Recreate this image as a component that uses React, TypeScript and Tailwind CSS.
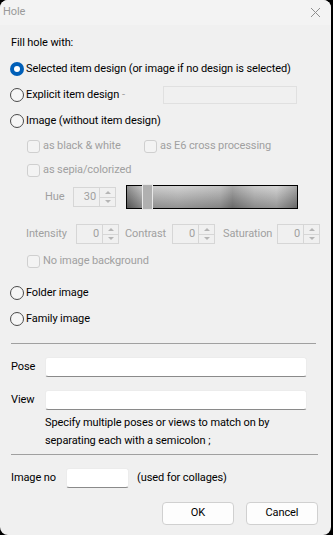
import React from 'react'

const font = { fontFamily: 'Roboto, "Segoe UI", sans-serif', letterSpacing: '-0.1px' }

function Radio({ checked, label }: { checked?: boolean; label: string }) {
  return (
    <div className="flex items-center h-[26px] whitespace-nowrap">
      {checked ? (
        <span className="shrink-0 w-[14px] h-[14px] rounded-full bg-[#005fb8] flex items-center justify-center mr-[2px] ml-[10px]">
          <span className="w-[6px] h-[6px] rounded-full bg-white" />
        </span>
      ) : (
        <span className="shrink-0 w-[14px] h-[14px] rounded-full border border-[#4a4a4a] bg-[#f6f6f6] mr-[2px] ml-[10px]" />
      )}
      <span className="text-[11px] text-black">{label}</span>
    </div>
  )
}

function Check({ label, className = '' }: { label: string; className?: string }) {
  return (
    <div className={`flex items-center whitespace-nowrap ${className}`}>
      <span className="shrink-0 w-[13px] h-[13px] rounded-[3px] border border-[#cfcfcf] bg-[#f3f3f3] mr-[3px]" />
      <span className="text-[11px] text-[#a0a0a0]">{label}</span>
    </div>
  )
}

function Spin({ value, w }: { value: string; w: string }) {
  return (
    <div className={`flex shrink-0 h-[20px] border border-[#d6d6d6] ${w}`}>
      <div className="flex-1 flex items-center justify-end pr-[3px] text-[11px] text-[#a0a0a0]">{value}</div>
      <div className="w-[16px] flex flex-col border-l border-[#d6d6d6]">
        <div className="flex-1 flex items-center justify-center border-b border-[#d6d6d6]">
          <span className="block w-0 h-0 border-l-[3px] border-r-[3px] border-b-[3px] border-l-transparent border-r-transparent border-b-[#b5b5b5]" />
        </div>
        <div className="flex-1 flex items-center justify-center">
          <span className="block w-0 h-0 border-l-[3px] border-r-[3px] border-t-[3px] border-l-transparent border-r-transparent border-t-[#b5b5b5]" />
        </div>
      </div>
    </div>
  )
}

function TextInput({ className = '' }: { className?: string }) {
  return (
    <div className={`shrink-0 h-[20px] bg-white rounded-[3px] border border-[#ececec] border-b-[#8a8a8a] ${className}`} />
  )
}

export default function App() {
  return (
    <div className="w-[333px] h-[535px] bg-black" style={font}>
      <div className="w-[331px] h-[535px] bg-[#f0f0f0] rounded-[8px] flex flex-col overflow-hidden">
        {/* Title bar */}
        <div className="h-[25px] bg-[#f3f3f3] flex items-center justify-between pl-[3px] pr-[10px]">
          <span className="text-[11px] text-[#9a9a9a]">Hole</span>
          <svg width="11" height="11" viewBox="0 0 11 11">
            <path d="M1 1L10 10M10 1L1 10" stroke="#8f8f8f" strokeWidth="1" />
          </svg>
        </div>

        <div className="flex flex-col pt-[5px]">
          <div className="h-[26px] flex items-center pl-[11px] text-[11px] text-black">Fill hole with:</div>
          <Radio checked label="Selected item design (or image if no design is selected)" />
          <div className="flex items-center h-[26px]">
            <div className="w-[122px] shrink-0">
              <Radio label="Explicit item design" />
            </div>
            <span className="w-[41px] shrink-0 text-[11px] text-[#a0a0a0]">-</span>
            <div className="w-[134px] h-[18px] border border-[#e0e0e0]" />
          </div>
          <Radio label="Image (without item design)" />

          <div className="h-[24px] flex items-center pl-[27px]">
            <Check label="as black & white" className="w-[117px] shrink-0" />
            <Check label="as E6 cross processing" />
          </div>
          <div className="h-[24px] flex items-center pl-[27px]">
            <Check label="as sepia/colorized" />
          </div>

          {/* Hue */}
          <div className="h-[30px] flex items-center pl-[45px]">
            <span className="text-[11px] text-[#a0a0a0] w-[28px] shrink-0">Hue</span>
            <Spin value="30" w="w-[43px]" />
            <div
              className="ml-[10px] w-[172px] h-[24px] border-[1px] border-black relative"
              style={{
                background:
                  'linear-gradient(to bottom, rgba(255,255,255,0.25), rgba(0,0,0,0.25)), linear-gradient(to right, #6f6f6f 0%, #b9b9b9 10%, #c4c4c4 30%, #b0b0b0 55%, #8c8c8c 62%, #b8b8b8 75%, #c6c6c6 88%, #8a8a8a 100%)',
              }}
            >
              <div className="absolute left-[15px] top-[-2px] w-[11px] h-[26px] border border-[#e8e8e8] bg-[#b0b0b0]" />
            </div>
          </div>

          {/* Intensity row */}
          <div className="h-[24px] mt-[10px] flex items-center pl-[26px] whitespace-nowrap">
            <span className="text-[11px] text-[#a0a0a0] w-[50px] shrink-0">Intensity</span>
            <Spin value="0" w="w-[43px]" />
            <span className="text-[11px] text-[#a0a0a0] ml-[6px] w-[47px] shrink-0">Contrast</span>
            <Spin value="0" w="w-[43px]" />
            <span className="text-[11px] text-[#a0a0a0] ml-[8px] w-[54px] shrink-0">Saturation</span>
            <Spin value="0" w="w-[43px]" />
          </div>

          <div className="h-[24px] mt-[3px] flex items-center pl-[27px]">
            <Check label="No image background" />
          </div>

          <div className="mt-[7px]">
            <Radio label="Folder image" />
            <Radio label="Family image" />
          </div>

          <div className="mt-[11px] mx-[11px] w-[305px] h-px bg-[#a0a0a0]" />

          <div className="mt-[13px] h-[20px] flex items-center pl-[11px]">
            <span className="text-[11px] text-black w-[34px] shrink-0">Pose</span>
            <TextInput className="w-[262px]" />
          </div>
          <div className="mt-[13px] h-[20px] flex items-center pl-[11px]">
            <span className="text-[11px] text-black w-[34px] shrink-0">View</span>
            <TextInput className="w-[262px]" />
          </div>
          <div className="mt-[4px] pl-[45px] text-[11px] leading-[18px] text-black whitespace-nowrap">
            <div>Specify multiple poses or views to match on by</div>
            <div>separating each with a semicolon ;</div>
          </div>

          <div className="mt-[4px] mx-[11px] w-[307px] h-px bg-[#a0a0a0]" />

          <div className="mt-[13px] h-[20px] flex items-center pl-[11px] whitespace-nowrap">
            <span className="text-[11px] text-black w-[55px] shrink-0">Image no</span>
            <TextInput className="w-[63px]" />
            <span className="text-[11px] text-black ml-[8px]">(used for collages)</span>
          </div>

          <div className="mt-[14px] flex justify-end gap-[12px] pr-[13px]">
            <button className="w-[72px] h-[23px] bg-[#fdfdfd] border border-[#d0d0d0] rounded-[4px] text-[11px] text-black">OK</button>
            <button className="w-[72px] h-[23px] bg-[#fdfdfd] border border-[#d0d0d0] rounded-[4px] text-[11px] text-black">Cancel</button>
          </div>
        </div>
      </div>
    </div>
  )
}
